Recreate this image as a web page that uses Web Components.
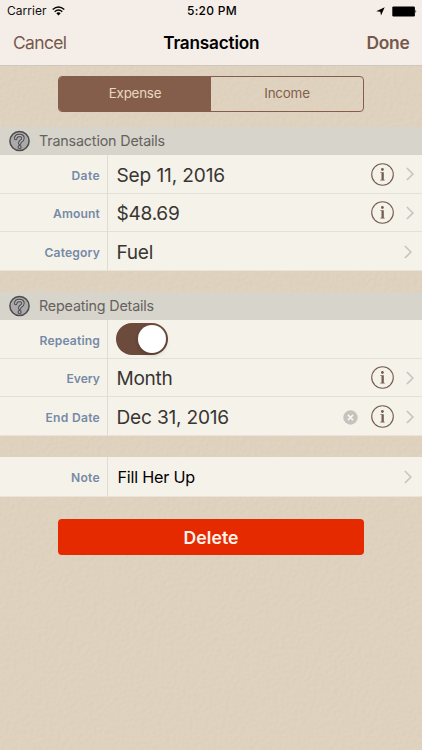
<!DOCTYPE html>
<html lang="en">
<head>
<meta charset="utf-8">
<title>Transaction</title>
<style>
html,body{margin:0;height:100%}
body{font-family:Inter,"Liberation Sans",sans-serif;background:#dfd2bf;overflow:hidden}
</style>
</head>
<body>
<app-screen>
  <nav-bar slot="top"></nav-bar>
  <segment-control></segment-control>
  <form-section heading="Transaction Details">
    <form-row label="Date" info more><fit-text size="19.1" w="108.5">Sep 11, 2016</fit-text></form-row>
    <form-row label="Amount" info more><fit-text size="19.1" w="63">$48.69</fit-text></form-row>
    <form-row label="Category" more><fit-text size="19.1" w="36.5">Fuel</fit-text></form-row>
  </form-section>
  <form-section heading="Repeating Details">
    <form-row label="Repeating"><toggle-switch></toggle-switch></form-row>
    <form-row label="Every" info more><fit-text size="19.1" w="56">Month</fit-text></form-row>
    <form-row label="End Date" info more clear><fit-text size="19.1" w="112.5">Dec 31, 2016</fit-text></form-row>
  </form-section>
  <form-section class="note">
    <form-row label="Note" more tall><fit-text size="16.2" w="77.5" color="#000">Fill Her Up</fit-text></form-row>
  </form-section>
  <delete-button></delete-button>
</app-screen>
<script>
const define=(name,html,setup)=>customElements.define(name,class extends HTMLElement{
  connectedCallback(){
    if(this.shadowRoot)return;
    this.attachShadow({mode:'open'}).innerHTML=typeof html==='function'?html(this):html;
    if(setup)setup(this);
  }
});

/* Text run whose tracking is adjusted to fill a set width */
define('fit-text',e=>`<style>:host{display:inline-block;white-space:nowrap;line-height:1.2;font-size:${e.getAttribute('size')}px;font-weight:${e.getAttribute('weight')||400};${e.hasAttribute('color')?`color:${e.getAttribute('color')};`:''}}span{display:inline-block}</style><span><slot></slot></span>`,
e=>{
  const s=e.shadowRoot.querySelector('span'),n=e.textContent.length;
  const gap=(Number(e.getAttribute('w'))-s.getBoundingClientRect().width)/n;
  s.style.letterSpacing=gap.toFixed(3)+'px';
});

define('app-screen',`<style>
:host{display:block;position:relative;width:422px;height:750px;background:#dfd2bf;overflow:hidden}
.paper{position:absolute;inset:0;width:100%;height:100%;opacity:.28}
main{position:relative}
</style>
<svg class="paper" aria-hidden="true"><filter id="grain" x="0" y="0" width="100%" height="100%" color-interpolation-filters="sRGB"><feTurbulence type="fractalNoise" baseFrequency=".25" numOctaves="3" seed="4" result="n"/><feDiffuseLighting in="n" surfaceScale=".28" lighting-color="#f0e2ce"><feDistantLight azimuth="225" elevation="68"/></feDiffuseLighting></filter><rect width="422" height="750" filter="url(#grain)"/></svg>
<main><slot name="top"></slot><slot></slot></main>`);

define('nav-bar',`<style>
:host{display:block;height:65px;background:#f5eee8;border-bottom:1px solid #d0c7bf;box-sizing:content-box}
.status{display:grid;grid-template-columns:1fr auto 1fr;align-items:center;height:22px;padding:0 5px 0 7px}
.left,.right{display:flex;align-items:center}
.left{gap:5px}.right{justify-content:flex-end;gap:7px}
.bar{display:grid;grid-template-columns:1fr auto 1fr;height:43px;align-items:center;padding:0 12.5px 0 13px}
.end{text-align:right}
svg{display:block}
</style>
<div class="status">
 <div class="left"><fit-text size="12" w="39.5" color="#111">Carrier</fit-text>
 <svg width="13" height="10" viewBox="0 0 13 10" fill="none" stroke="#000" stroke-width="1.5"><path d="M.7 3.5Q6.5-1.6 12.3 3.5M2.7 5.7Q6.5 2.4 10.3 5.7"/><path d="M4.3 7.2Q6.5 5.4 8.7 7.2L6.5 9.4Z" fill="#000" stroke="none"/></svg></div>
 <fit-text size="12" w="50" weight="500" color="#000">5:20 PM</fit-text>
 <div class="right"><svg width="9" height="9" viewBox="0 0 9 9"><path d="M8.7.3L5 8.6 4.3 4.8.2 4.3Z" fill="#000"/></svg>
 <svg width="25" height="11" viewBox="0 0 25 11"><rect x=".3" y=".4" width="22.6" height="10" rx="1.2"/><path d="M23.5 3.6Q25 5.4 23.5 7.2Z"/></svg></div>
</div>
<div class="bar"><fit-text size="17.4" w="53.5" color="#76594b">Cancel</fit-text><fit-text size="17.2" w="96" weight="600" color="#000">Transaction</fit-text><span class="end"><fit-text size="17.4" w="43" weight="600" color="#76594b">Done</fit-text></span></div>`);

define('segment-control',`<style>
:host{display:grid;grid-template-columns:1fr 1fr;box-sizing:border-box;width:306px;height:36px;margin:9.5px 0 0 58px;border:1px solid #845e4b;border-radius:4px;overflow:hidden}
div{display:flex;align-items:center;justify-content:center}
.on{background:#845e4b}
</style><div class="on"><fit-text size="13.4" w="52.5" color="#ead7c1">Expense</fit-text></div><div><fit-text size="13.4" w="45.5" color="#845e4b">Income</fit-text></div>`);

define('form-section',e=>{const h=e.getAttribute('heading');return `<style>
:host{display:block;margin-top:${h?(h[0]==='T'?15.5:21):21}px}
header{display:flex;align-items:center;gap:9px;height:28px;padding-left:9px;background:#d7d4cc;color:#65625d}
svg{display:block}
</style>${h?`<header><svg width="21" height="22" viewBox="0 0 21 22"><circle cx="10.5" cy="11" r="9.6" fill="#aaa9ab" stroke="#4e4b4a" stroke-width="1.5"/><path d="M6.7 8.5Q6.8 5.5 10.4 5.4Q14.1 5.5 14 8.3Q13.9 10.1 12 11Q10.7 11.7 10.7 13.2" fill="none" stroke="#4b4848" stroke-width="3.4" stroke-linecap="round"/><path d="M6.7 8.5Q6.8 5.5 10.4 5.4Q14.1 5.5 14 8.3Q13.9 10.1 12 11Q10.7 11.7 10.7 13.2" fill="none" stroke="#b9b8ba" stroke-width="1.4" stroke-linecap="round"/><circle cx="10.6" cy="17" r="1.5" fill="#b9b8ba" stroke="#4b4848" stroke-width="1.1"/></svg><fit-text size="14.3" w="${h[0]==='T'?126:115}">${h}</fit-text></header>`:''}<slot></slot>`});

const labelWidth={Date:28.5,Amount:47,Category:55.5,Repeating:60.5,Every:33.5,'End Date':54.5,Note:29};
define('form-row',e=>{const l=e.getAttribute('label'),has=a=>e.hasAttribute(a);return `<style>
:host{display:grid;grid-template-columns:107px 1fr;height:${has('tall')?40:38.667}px;background:#f5f2ea;color:#383633}
.label{display:flex;align-items:center;justify-content:flex-end;padding:4px 7px 0 0;border-right:1px solid #dedcd5;color:#758aa6}
.value{display:flex;align-items:center;padding:0 ${has('info')?8.5:10.5}px 0 ${has('tall')?9.5:8}px}
.label,.value{border-bottom:1px solid #e2e0d9;box-sizing:border-box}
:host(:last-child) .label,:host(:last-child) .value{border-bottom-color:#e9e3d8}
.label{width:108px}
.value{margin-left:1px}
::slotted(fit-text){padding:${has('tall')?3:2.5}px 0 0 ${has('tall')?0:.5}px}
.space{flex:1}
svg{display:block;flex:none}
.clear{margin:3px 13.5px 0 0}.info{margin:1px 11.5px 0 0}
.more{margin-top:1px}
</style><div class="label"><fit-text size="12.1" weight="600" w="${labelWidth[l]}">${l}</fit-text></div>
<div class="value"><slot></slot><span class="space"></span>
${has('clear')?'<svg class="clear" width="15" height="15" viewBox="0 0 15 15"><circle cx="7.5" cy="7.5" r="7.2" fill="#c5c3bd"/><path d="M4.9 4.9l5.2 5.2M10.1 4.9l-5.2 5.2" stroke="#f8f6ef" stroke-width="1.6"/></svg>':''}
${has('info')?'<svg class="info" width="23" height="23" viewBox="0 0 23 23"><circle cx="11.5" cy="11.5" r="10.8" fill="none" stroke="#745c50" stroke-width="1.1"/><circle cx="11.4" cy="6.5" r="1.4" fill="#745c50"/><path d="M9.4 9.2h3.4v7.6h.9v.8H9.3v-.8h1.2v-6.7H9.4z" fill="#745c50"/></svg>':''}
${has('more')?'<svg class="more" width="8" height="14" viewBox="0 0 8 14"><path d="M.9 1l6 6-6 6" fill="none" stroke="#c6c5c2" stroke-width="1.7"/></svg>':''}
</div>`});

define('toggle-switch',`<style>
:host{display:flex;align-items:center;justify-content:flex-end;width:52px;height:32px;box-sizing:border-box;padding:2px;border-radius:16px;background:#6c4a3c}
i{display:block;width:28.5px;height:28.5px;border-radius:50%;background:#fff;box-shadow:0 2px 4px #0003}
</style><i></i>`);

define('delete-button',`<style>
:host{display:flex;align-items:center;justify-content:center;box-sizing:border-box;width:306px;height:36px;margin:22.5px 0 0 58px;padding-top:1px;border-radius:4px;background:#e62a00}
</style><fit-text size="17.6" w="55" weight="600" color="#fff3ec">Delete</fit-text>`);
</script>
</body>
</html>
